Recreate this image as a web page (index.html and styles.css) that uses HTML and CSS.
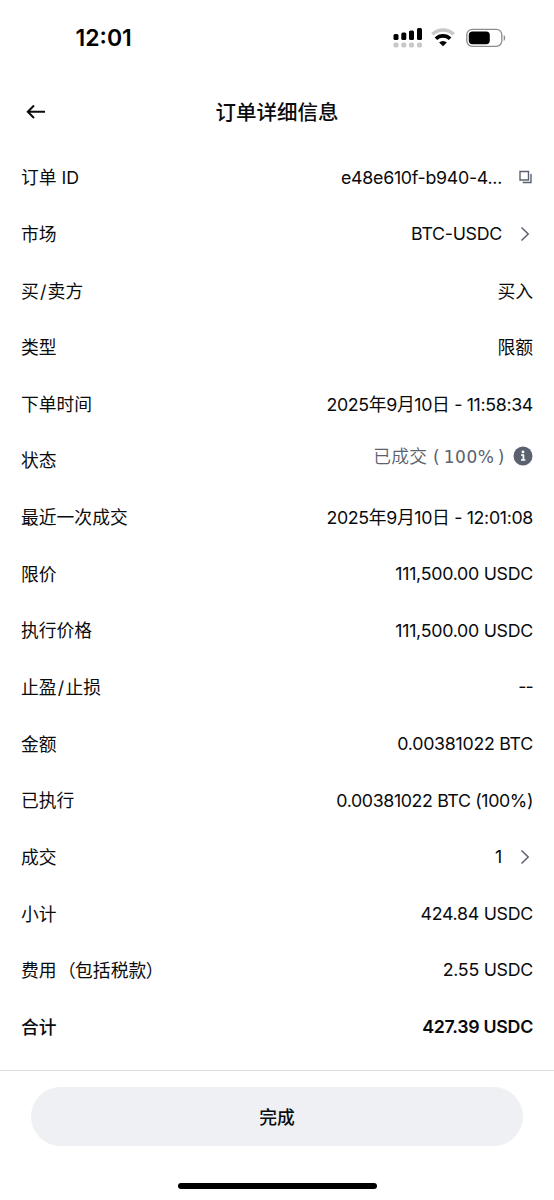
FILE: index.html
```html
<!DOCTYPE html>
<html lang="zh-CN">
<head>
    <meta charset="UTF-8">
    <meta name="viewport" content="width=device-width, initial-scale=1.0">
    <title>订单详细信息</title>
    <link rel="stylesheet" href="styles.css">
</head>
<body>
    <div class="status-bar">
        <span class="time">12:01</span>
        <div class="status-icons">
            <svg class="signal" width="30" height="22" viewBox="0 0 30 22">
                <g fill="#000">
                    <rect x="0.5" y="7" width="5" height="6" rx="1.5"/>
                    <rect x="8.3" y="5.5" width="5" height="7.5" rx="1.5"/>
                    <rect x="16" y="3.5" width="5" height="9.5" rx="1.5"/>
                    <rect x="24" y="1" width="5" height="12" rx="1.5"/>
                </g>
                <g fill="#c8c8c8">
                    <rect x="0.5" y="15.5" width="5" height="5" rx="1.7"/>
                    <rect x="8.3" y="15.5" width="5" height="5" rx="1.7"/>
                    <rect x="16" y="15.5" width="5" height="5" rx="1.7"/>
                    <rect x="24" y="15.5" width="5" height="5" rx="1.7"/>
                </g>
            </svg>
            <svg class="wifi" width="24" height="20" viewBox="0 0 24 20">
                <path d="M1.3 6.3a15.3 15.3 0 0 1 21.4 0" fill="none" stroke="#c8c8c8" stroke-width="3.4"/>
                <path d="M4.9 10.8a10 10 0 0 1 14.2 0" fill="none" stroke="#000" stroke-width="3.6"/>
                <path d="M8.1 14.5a5.6 5.6 0 0 1 7.8 0L12 18.3z" fill="#000"/>
            </svg>
            <svg class="battery" width="40" height="20" viewBox="0 0 40 20">
                <rect x="0.8" y="1.3" width="35" height="17" rx="5.5" fill="none" stroke="#8c8c8c" stroke-width="1.3"/>
                <rect x="2.8" y="3.5" width="21" height="12.7" rx="3.7" fill="#000"/>
                <path d="M37.7 7v6c2-.9 2-5.1 0-6z" fill="#8c8c8c"/>
            </svg>
        </div>
    </div>

    <header class="header">
        <svg class="back" width="20" height="16" viewBox="0 0 20 16">
            <path d="M8 1.5L1.8 7.8L8 14M2 7.8h17" fill="none" stroke="#0a0b0d" stroke-width="2"/>
        </svg>
        <h1 class="title">订单详细信息</h1>
    </header>

    <main class="details">
        <div class="row">
            <span class="label">订单 ID</span>
            <span class="value">e48e610f-b940-4...</span>
            <svg class="row-icon copy" width="16" height="16" viewBox="0 0 16 16">
                <path d="M2 2.5h8.5v8.5H2zM13 5v8.5H4.7" fill="none" stroke="#5b616e" stroke-width="1.4"/>
            </svg>
        </div>
        <div class="row">
            <span class="label">市场</span>
            <span class="value">BTC-USDC</span>
            <svg class="row-icon" width="16" height="16" viewBox="0 0 16 16">
                <path d="M4.5 1.5L11.2 8L4.5 14.5" fill="none" stroke="#5b616e" stroke-width="1.5"/>
            </svg>
        </div>
        <div class="row">
            <span class="label">买<span class="slash">/</span>卖方</span>
            <span class="value text">买入</span>
        </div>
        <div class="row">
            <span class="label">类型</span>
            <span class="value text">限额</span>
        </div>
        <div class="row">
            <span class="label">下单时间</span>
            <span class="value date">2025年9月10日 - 11:58:34</span>
        </div>
        <div class="row">
            <span class="label">状态</span>
            <span class="value filled">已成交<span class="percent"> (<span class="number">100%</span>)</span></span>
            <svg class="info" width="20" height="20" viewBox="0 0 20 20">
                <circle cx="10" cy="10" r="9.5" fill="#5b616e"/>
                <circle cx="10" cy="5.9" r="1.4" fill="#fff"/>
                <path d="M8 9h2.4v5.2M8 14h4.4" fill="none" stroke="#fff" stroke-width="1.7"/>
            </svg>
        </div>
        <div class="row">
            <span class="label">最近一次成交</span>
            <span class="value date">2025年9月10日 - 12:01:08</span>
        </div>
        <div class="row">
            <span class="label">限价</span>
            <span class="value">111,500.00 USDC</span>
        </div>
        <div class="row">
            <span class="label">执行价格</span>
            <span class="value">111,500.00 USDC</span>
        </div>
        <div class="row">
            <span class="label">止盈<span class="slash">/</span>止损</span>
            <span class="value dashes">--</span>
        </div>
        <div class="row">
            <span class="label">金额</span>
            <span class="value">0.00381022 BTC</span>
        </div>
        <div class="row">
            <span class="label">已执行</span>
            <span class="value executed">0.00381022 BTC (100%)</span>
        </div>
        <div class="row">
            <span class="label">成交</span>
            <span class="value">1</span>
            <svg class="row-icon" width="16" height="16" viewBox="0 0 16 16">
                <path d="M4.5 1.5L11.2 8L4.5 14.5" fill="none" stroke="#5b616e" stroke-width="1.5"/>
            </svg>
        </div>
        <div class="row">
            <span class="label">小计</span>
            <span class="value">424.84 USDC</span>
        </div>
        <div class="row">
            <span class="label">费用<span class="paren-open">（</span>包括税款<span class="paren-close">）</span></span>
            <span class="value">2.55 USDC</span>
        </div>
        <div class="row total">
            <span class="label">合计</span>
            <span class="value">427.39 USDC</span>
        </div>
    </main>

    <footer class="footer">
        <button class="done">完成</button>
        <div class="home-indicator"></div>
    </footer>
</body>
</html>
```

FILE: styles.css
```css
* {
    box-sizing: border-box;
}
body {
    margin: 0;
    height: 1200px;
    display: flex;
    flex-direction: column;
    background: #fff;
    color: #0a0b0d;
    font-family: Inter, "Noto Sans CJK SC", sans-serif;
    font-size: 17.8px;
}
svg {
    display: block;
    flex: none;
}
.status-bar {
    height: 76px;
    padding: 0 48px 0 75.5px;
    display: flex;
    align-items: center;
    justify-content: space-between;
}
.time {
    font-size: 23px;
    font-weight: 600;
    color: #000;
}
.status-icons {
    display: flex;
    align-items: center;
}
.wifi {
    margin-left: 8px;
}
.battery {
    margin-left: 11px;
}
.header {
    height: 72.7px;
    padding: 0 26px;
    display: grid;
    grid-template-columns: 20px 1fr 20px;
    align-items: center;
}
.title {
    margin: 0;
    padding-bottom: 2px;
    text-align: center;
    font-size: 20.5px;
    font-weight: 500;
}
.details {
    padding: 0 21px;
}
.row {
    height: 56.65px;
    display: flex;
    align-items: center;
    white-space: nowrap;
}
.label {
    padding-bottom: 1.5px;
}
.slash {
    margin: 0 1.2px;
}
.paren-open {
    margin: 0 -0.8px 0 1.5px;
}
.paren-close {
    margin-left: -0.5px;
}
.value {
    margin-left: auto;
    letter-spacing: -0.28px;
}
.text {
    letter-spacing: 0;
    padding-bottom: 1.5px;
}
.date {
    letter-spacing: -0.34px;
    padding-bottom: 2px;
}
.dashes {
    letter-spacing: -0.8px;
}
.executed {
    letter-spacing: -0.38px;
}
.row-icon {
    margin-left: 15px;
}
.copy {
    margin: 0 -1px 0 16px;
}
.filled {
    color: #5b616e;
    font-family: "Noto Sans CJK SC", sans-serif;
    font-weight: 350;
    letter-spacing: 0.2px;
    padding-bottom: 10px;
}
.percent {
    font-family: "DejaVu Sans", sans-serif;
    font-size: 17px;
    font-weight: 400;
    letter-spacing: 0.5px;
}
.number {
    margin: 0 3.5px;
}
.info {
    margin: 0 0 8px 8px;
}
.total .label {
    font-weight: 500;
}
.total .value {
    font-weight: 600;
}
.footer {
    margin-top: auto;
    height: 130px;
    padding: 16px 31px 0;
    border-top: 1px solid #dcdee2;
}
.done {
    display: block;
    width: 100%;
    height: 59px;
    border: none;
    border-radius: 30px;
    background: #eef0f3;
    color: #0a0b0d;
    font: inherit;
    font-weight: 500;
    padding-bottom: 3px;
}
.home-indicator {
    width: 199px;
    height: 6px;
    margin: 37px auto 0;
    border-radius: 3px;
    background: #000;
}
```
